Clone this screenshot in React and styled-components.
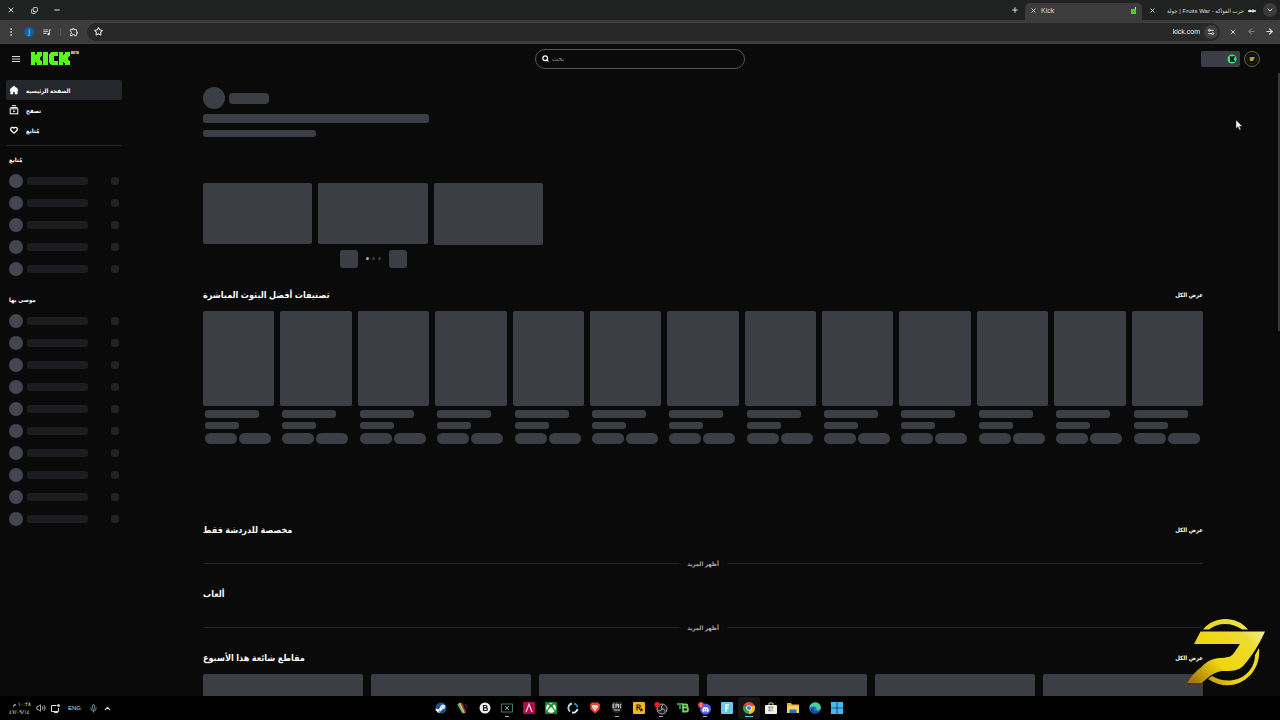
import React from "react";
import styled, { createGlobalStyle, css } from "styled-components";
import {
  Search,
  X,
  Plus,
  Minus,
  Star,
  ArrowLeft,
  ArrowRight,
  ChevronDown,
  ChevronUp,
  EllipsisVertical,
  Settings2,
  Mic,
  Volume2,
  Heart,
  Copy,
} from "lucide-react";
import { FaDiscord, FaSteamSymbol, FaXbox } from "react-icons/fa";
import { MdOutlineExtension, MdQueueMusic } from "react-icons/md";

const following = [1, 2, 3, 4, 5];
const recommended = [1, 2, 3, 4, 5, 6, 7, 8, 9, 10];
const categories = [1, 2, 3, 4, 5, 6, 7, 8, 9, 10, 11, 12, 13];
const clips = [1, 2, 3, 4, 5, 6];

function KickLogo() {
  return (
    <svg width="50" height="16" viewBox="0 0 50 16" role="img" aria-label="Kick">
      <g fill="#53fc18">
        <path d="M1 1h4v3h1V3h1V1h5v4h-1v1h-1v3h1v1h1v4H7v-2H6v-1H5v3H1z" />
        <path d="M13 1h5v13h-5z" />
        <path d="M21 1h7v4h-4v5h4v4h-7v-1h-1v-1h-1V3h1V2h1z" />
        <path d="M29 1h4v3h1V3h1V1h5v4h-1v1h-1v3h1v1h1v4h-5v-2h-1v-1h-1v3h-4z" />
      </g>
    </svg>
  );
}

function KickCoin() {
  return (
    <svg width="10" height="10" viewBox="0 0 10 10">
      <circle cx="5" cy="5" r="4.500" fill="#35e57c" />
      <path d="M3 2h1.500v1.600L6 2h1.600v1.600L6.300 5l1.300 1.400V8H6L4.500 6.400V8H3z" fill="#06150b" />
    </svg>
  );
}

function HomeIcon() {
  return (
    <svg width="10" height="10" viewBox="0 0 10 10" fill="#fff">
      <path d="M5 .8 1.200 3.800v1.400H.8V6h.6v3.200h2.800V7h1.600v2.200h2.800V6h.6V5.200h-.4V3.800z" />
    </svg>
  );
}

function BrowseIcon() {
  return (
    <svg width="10" height="10" viewBox="0 0 10 10" fill="none" stroke="#fff">
      <path d="M3 .7h4M1.500 2.500h7" />
      <rect x="1.200" y="3.800" width="7.600" height="5" />
      <path d="M4.300 5v2.600L6.400 6.300z" fill="#fff" stroke="none" />
    </svg>
  );
}

function HeartIcon() {
  return (
    <svg width="10" height="10" viewBox="0 0 10 10">
      <Heart x="1" y="1" size={8} strokeWidth={4} />
    </svg>
  );
}

function Emblem() {
  return (
    <svg width="80" height="72" viewBox="0 0 80 72">
      <defs>
        <linearGradient id="gold" gradientUnits="userSpaceOnUse" x1="72" y1="4" x2="8" y2="66">
          <stop offset="0" stopColor="#f1efa0" />
          <stop offset="0.250" stopColor="#ecdc2c" />
          <stop offset="0.650" stopColor="#efd60c" />
          <stop offset="1" stopColor="#a8760a" />
        </linearGradient>
      </defs>
      <g fill="url(#gold)">
        <path d="M17 12.500C28-1.500 51-1.500 62 12.500H56C47 5 31 5 23 12.500Z" />
        <path d="M73 31C76 59 47 79 22 62L26 59C46 71 69 58 69 38Z" />
        <path d="M14.500 14.500H79C74 26 66 39 58 48C53 54 46 54 36 54C26 55 20 63 15.500 66H1.500C4 60 10 54 15.500 50C22 43 28 41 36 41C43 40 45 40 48 36L54 27H8Z" />
      </g>
    </svg>
  );
}

function ColorSquare({ color, children }) {
  return (
    <svg width="12" height="12" viewBox="0 0 12 12">
      <rect width="12" height="12" rx="1" fill={color} />
      {children}
    </svg>
  );
}

const apps = [
  {
    name: "Steam",
    icon: (
      <svg width="12" height="12" viewBox="0 0 12 12">
        <circle cx="6" cy="6" r="5.500" fill="#17529a" />
        <FaSteamSymbol x="0" y="1" size={11} color="#fff" />
      </svg>
    ),
  },
  {
    name: "Stripes",
    icon: (
      <svg width="12" height="12" viewBox="0 0 12 12" strokeWidth="1.800">
        <path d="M1 2l5 9" stroke="#3fae82" />
        <path d="M2.500 1l5 10" stroke="#e4c553" />
        <path d="M4.500 1l4 9" stroke="#9c2d39" />
        <path d="M8 2l2 4" stroke="#381c42" />
      </svg>
    ),
  },
  {
    name: "B",
    icon: (
      <svg width="12" height="12" viewBox="0 0 12 12">
        <circle cx="6" cy="6" r="5.500" fill="#eee" />
        <path d="M4.500 3.500h2.200c1.600 0 1.600 2.300 0 2.300H4.500h2.600c1.700 0 1.700 2.700 0 2.700H4.500z" fill="none" stroke="#181818" strokeWidth="1.200" />
      </svg>
    ),
  },
  {
    name: "Monitor",
    open: true,
    icon: (
      <svg width="12" height="12" viewBox="0 0 12 12" fill="none" stroke="#49766c">
        <rect x=".5" y="2" width="11" height="8" />
        <path d="m4 4 4 4M8 4 4 8" stroke="#75a99a" />
      </svg>
    ),
  },
  {
    name: "Lambda",
    icon: (
      <ColorSquare color="#a80d4c">
        <path d="M3 10 6 2l3 8" fill="none" stroke="#f5c8d8" strokeWidth="1.300" />
      </ColorSquare>
    ),
  },
  {
    name: "Xbox",
    icon: (
      <ColorSquare color="#168a2b">
        <FaXbox x="1" y="1" size={10} color="#fff" />
      </ColorSquare>
    ),
  },
  {
    name: "Ring",
    icon: (
      <svg width="12" height="12" viewBox="0 0 12 12" fill="none" strokeWidth="1.800">
        <path d="M5 1.500a4.600 4.600 0 0 0-2 8" stroke="#b9d4ef" />
        <path d="M7 1.500a4.600 4.600 0 0 1 3.500 4" stroke="#3f7fb8" />
        <path d="M10.500 7A4.600 4.600 0 0 1 5 10.500" stroke="#e6eef6" />
      </svg>
    ),
  },
  {
    name: "Brave",
    icon: (
      <svg width="12" height="12" viewBox="0 0 12 12">
        <path d="M3 .5h6l2 2-.5 5L6 11.500 1.500 7.500 1 2.500z" fill="#ee4027" />
        <path d="M3.500 3 5 3.300h2L8.500 3l.5 2-1.500 2L6 9.500 4.500 7 3 5z" fill="#fff" />
        <path d="m4.200 4.800 1.300.7M7.800 4.800l-1.300.7M6 6v1.500" stroke="#ee4027" strokeWidth=".8" />
      </svg>
    ),
  },
  {
    name: "Epic",
    open: true,
    icon: (
      <svg width="12" height="12" viewBox="0 0 12 12">
        <path d="M1 0h10v9L6 11.500 1 9z" fill="#24272a" />
        <path d="M3.500 2H2v4h1.500M2 4h1.200M4.900 6V2h1.300v2H5M7.500 2v4M10.200 2.500H9.200v3h1M3 8h6" fill="none" stroke="#ddd" strokeWidth=".9" />
      </svg>
    ),
  },
  {
    name: "Rockstar",
    icon: (
      <ColorSquare color="#f2b51d">
        <path d="M4 8.500V3h2.200c1.500 0 1.300 2.300 0 2.300H4.500M6 5.500l.8 2" fill="none" stroke="#2a2008" strokeWidth="1.200" />
        <path d="m8.200 5.500.6 1.500h1.700L9.200 8l.4 1.700-1.400-1-1.400 1L7.200 8 6 7h1.600z" fill="#2a2008" />
      </ColorSquare>
    ),
  },
  {
    name: "OBS",
    open: true,
    icon: (
      <svg width="14" height="13" viewBox="0 0 14 13">
        <circle cx="8" cy="7" r="5" fill="#1d1e20" stroke="#aaa" />
        <path d="M8 7c-1-2-.5-3.500.8-4M8 7c2 0 3.200 1 3 2.500M8 7c-.8 1.800-2.500 2.300-3.600 1.500" fill="none" stroke="#bbb" />
        <circle cx="3.200" cy="2.800" r="2.800" fill="#ed1c1c" />
      </svg>
    ),
  },
  {
    name: "TB",
    icon: (
      <svg width="12" height="12" viewBox="0 0 12 12" fill="none" strokeWidth="1.800">
        <path d="M0 2h6M3 2v5" stroke="#3b8f5e" />
        <path d="M6 2.500h3c2 0 2 3 0 3H6h3.500c2 0 2 4 0 4H6zv7" stroke="#76d15e" />
      </svg>
    ),
  },
  {
    name: "Discord",
    open: true,
    icon: (
      <svg width="14" height="13" viewBox="0 0 14 13">
        <circle cx="7.500" cy="7" r="5.500" fill="#5562e8" />
        <FaDiscord x="4" y="4" size={7} color="#fff" />
        <circle cx="3" cy="3" r="3" fill="#dc4452" />
        <path d="M2 2h2M2 4h2" stroke="#f4bfc4" />
      </svg>
    ),
  },
  {
    name: "F",
    icon: (
      <ColorSquare color="#69c6e6">
        <path d="M5 10V3h3M5 6h2.500" fill="none" stroke="#f3fcff" strokeWidth="1.500" />
      </ColorSquare>
    ),
  },
  {
    name: "Chrome",
    active: true,
    icon: (
      <svg width="12" height="12" viewBox="0 0 12 12">
        <path d="M6 6 .8 3A6 6 0 0 1 11.200 3z" fill="#e8453c" />
        <path d="M6 6 11.200 3A6 6 0 0 1 6 12z" fill="#fbc116" />
        <path d="M6 6v6A6 6 0 0 1 .8 3z" fill="#2ea14f" />
        <circle cx="6" cy="6" r="2.800" fill="#fff" />
        <circle cx="6" cy="6" r="2.100" fill="#3b7de9" />
      </svg>
    ),
  },
  {
    name: "Store",
    icon: (
      <svg width="12" height="12" viewBox="0 0 12 12">
        <path d="M4 3V1h4v2" fill="none" stroke="#b9c4cc" />
        <rect y="3" width="12" height="9" rx="1" fill="#edf0f2" />
        <path d="M3.500 4.500h2v2h-2z" fill="#ef5334" />
        <path d="M6.200 4.500h2v2h-2z" fill="#71b528" />
        <path d="M3.500 7.300h2v2h-2z" fill="#2a9de0" />
        <path d="M6.200 7.300h2v2h-2z" fill="#f4b51b" />
      </svg>
    ),
  },
  {
    name: "Files",
    icon: (
      <svg width="12" height="12" viewBox="0 0 12 12">
        <path d="M0 1h4l1 1.500h7V11H0z" fill="#eeb42c" />
        <path d="M0 4h12v7H0z" fill="#fad462" />
        <path d="M2.500 7.500h7V11h-7z" fill="#2774b8" />
      </svg>
    ),
  },
  {
    name: "Edge",
    icon: (
      <svg width="12" height="12" viewBox="0 0 12 12">
        <circle cx="6" cy="6" r="5.800" fill="#1c78c8" />
        <path d="M.3 5.500C1.500-1.500 12-1.200 11.800 6c-.3 2-3 2.400-4.600 1.600C8.600 5.500 6 3 .3 5.500z" fill="#48cf9b" />
        <path d="M5 5.200c-1.500 2.400.5 5.200 5.300 4.200C8 12.500 2 12 1.800 8.300 1.800 6.500 3.500 5.200 5 5.200z" fill="#124b92" />
      </svg>
    ),
  },
  {
    name: "Start",
    icon: (
      <svg width="12" height="12" viewBox="0 0 12 12" fill="#45b8f2">
        <path d="M0 0h5.700v5.700H0zM6.300 0H12v5.700H6.300zM0 6.300h5.700V12H0zM6.300 6.300H12V12H6.300z" />
      </svg>
    ),
  },
];

function BrowserChrome() {
  return (
    <>
      <TabStrip>
        <WindowButtons>
          <IconButton aria-label="Close window"><X size={8} strokeWidth={3} /></IconButton>
          <IconButton aria-label="Restore"><RestoreIcon size={7} strokeWidth={3} /></IconButton>
          <IconButton aria-label="Minimize"><Minus size={8} strokeWidth={3} /></IconButton>
        </WindowButtons>
        <Tabs>
          <IconButton aria-label="New tab"><Plus size={8} strokeWidth={3} /></IconButton>
          <Tab $active>
            <X size={7} strokeWidth={3} />
            <span>Kick</span>
            <Favicon width="7" height="8" viewBox="0 0 7 8">
              <path d="M1 2h5v5H1z" fill="#43d91c" />
              <path d="M3 4h1v1H3z" fill="#246d16" />
              <path d="M5 0h1v2H5z" fill="#d5ffd0" />
            </Favicon>
          </Tab>
          <Tab>
            <X size={7} strokeWidth={3} />
            <TabTitle dir="rtl">حرب الفواكه - Fruits War | جولة</TabTitle>
            <svg width="8" height="4" viewBox="0 0 8 4">
              <path d="M0 2h8M2 .8v2.400M5 .5v3" stroke="#eee" strokeWidth="1.400" />
            </svg>
          </Tab>
          <RoundButton aria-label="Search tabs"><ChevronDown size={8} strokeWidth={3} /></RoundButton>
        </Tabs>
      </TabStrip>
      <Toolbar>
        <ToolGroup>
          <IconButton aria-label="Menu"><EllipsisVertical size={10} /></IconButton>
          <Profile>j</Profile>
          <IconButton aria-label="Media"><MdQueueMusic size={10} /></IconButton>
          <Separator />
          <IconButton aria-label="Extensions"><MdOutlineExtension size={10} /></IconButton>
        </ToolGroup>
        <AddressBar>
          <Star size={9} strokeWidth={3} />
          <Address aria-label="Address" defaultValue="kick.com" />
          <SiteInfo><Settings2 size={8} strokeWidth={3} /></SiteInfo>
        </AddressBar>
        <NavGroup>
          <IconButton aria-label="Stop"><X size={8} strokeWidth={3} /></IconButton>
          <IconButton aria-label="Forward" $dim><ArrowLeft size={9} strokeWidth={3} /></IconButton>
          <IconButton aria-label="Back"><ArrowRight size={9} strokeWidth={3} /></IconButton>
        </NavGroup>
      </Toolbar>
    </>
  );
}

function Channels({ title, items }) {
  return (
    <ChannelGroup>
      <ChannelTitle>{title}</ChannelTitle>
      {items.map((item) => (
        <Channel key={item}>
          <Avatar />
          <ChannelName />
          <ChannelDot />
        </Channel>
      ))}
    </ChannelGroup>
  );
}

function SectionHead({ title, all }) {
  return (
    <Head>
      <Title>{title}</Title>
      {all && <AllLink href="#all">عرض الكل</AllLink>}
    </Head>
  );
}

function ShowMore() {
  return (
    <More>
      <MoreButton>أظهر المزيد</MoreButton>
    </More>
  );
}

function App() {
  return (
    <Screen>
      <GlobalStyle />
      <BrowserChrome />
      <Page>
        <Header>
          <Brand>
            <MenuButton aria-label="Menu">
              <svg width="8" height="8" viewBox="0 0 8 8" stroke="#ddd">
                <path d="M0 1.500h8M0 4h8M0 6.500h8" strokeWidth="1.200" />
              </svg>
            </MenuButton>
            <KickLogo />
            <Beta>BETA</Beta>
          </Brand>
          <SearchBox>
            <Search size={7} strokeWidth={4} />
            <SearchInput aria-label="بحث" placeholder="بحث" />
          </SearchBox>
          <Account>
            <Coins aria-label="Wallet"><KickCoin /></Coins>
            <UserButton aria-label="Profile">
              <svg width="16" height="16" viewBox="0 0 16 16" fill="none">
                <circle cx="8" cy="8" r="7.500" stroke="#6f6a34" />
                <circle cx="8" cy="8" r="5" stroke="#2c2a18" />
                <path d="M5.500 6h5.500L9 10H6z" fill="#b89f22" />
              </svg>
            </UserButton>
          </Account>
        </Header>
        <Body>
          <Sidebar>
            <Nav>
              <NavLink href="#home" $active><HomeIcon />الصفحة الرئيسية</NavLink>
              <NavLink href="#browse"><BrowseIcon />تصفح</NavLink>
              <NavLink href="#following"><HeartIcon />مُتابع</NavLink>
            </Nav>
            <Channels title="مُتابع" items={following} />
            <Channels title="موصى بها" items={recommended} />
          </Sidebar>
          <Main>
            <Content>
              <Hero>
                <HeroUser>
                  <Bone $w={22} $h={22} $r={11} />
                  <Bone $w={40} $h={11} $r={4} />
                </HeroUser>
                <Bone $w={226} $h={9} $r={3} />
                <HeroSub><Bone $w={113} $h={7} $r={3} /></HeroSub>
                <HeroCards>
                  <Card />
                  <Card />
                  <Card />
                </HeroCards>
                <Pager>
                  <PagerButton aria-label="Previous" />
                  <Dots><Dot $active /><Dot /><Dot /></Dots>
                  <PagerButton aria-label="Next" />
                </Pager>
              </Hero>
              <SectionHead title="تصنيفات أفضل البثوث المباشرة" all />
              <CategoryGrid>
                {categories.map((item) => (
                  <div key={item}>
                    <Poster />
                    <PosterInfo>
                      <Bone $w={54} $h={8} $r={3} />
                      <Bone $w={34} $h={7} $r={3} />
                      <Pills>
                        <Bone $w={32} $h={11} $r={6} />
                        <Bone $w={32} $h={11} $r={6} />
                      </Pills>
                    </PosterInfo>
                  </div>
                ))}
              </CategoryGrid>
              <SectionHead title="مخصصة للدردشة فقط" all />
              <ShowMore />
              <SectionHead title="ألعاب" />
              <ShowMore />
              <SectionHead title="مقاطع شائعة هذا الأسبوع" all />
              <ClipGrid>
                {clips.map((item) => <Clip key={item} />)}
              </ClipGrid>
            </Content>
          </Main>
        </Body>
        <ScrollThumb />
      </Page>
      <Taskbar>
        <Tray>
          <Clock dir="rtl">
            <span>١٠:٢٨ م</span>
            <span dir="ltr">٤٧/٠٩/١٤</span>
          </Clock>
          <Volume2 size={10} strokeWidth={2} />
          <svg width="9" height="9" viewBox="0 0 9 9" fill="none" stroke="#ddd">
            <path d="M5.500 1.500h-5v6h7V4M3 8.500h4" />
            <circle cx="7.500" cy="1.500" r="1" fill="#ddd" />
          </svg>
          <Language>ENG</Language>
          <Mic size={9} strokeWidth={2} color="#7fb5b5" />
          <ChevronUp size={9} strokeWidth={3} />
        </Tray>
        <Apps>
          {apps.map((app) => (
            <AppButton key={app.name} aria-label={app.name} $open={app.open} $active={app.active}>
              {app.icon}
            </AppButton>
          ))}
        </Apps>
      </Taskbar>
      <Watermark><Emblem /></Watermark>
      <Cursor width="8" height="12" viewBox="0 0 8 12">
        <path d="M1 1v8.500l2-1.800L4.500 11l1.300-.6L4.500 7.300h2.700z" fill="#fff" stroke="#222" strokeWidth=".5" />
      </Cursor>
    </Screen>
  );
}

export default App;

const bone = "#3b3e44";

const GlobalStyle = createGlobalStyle`
  * {
    box-sizing: border-box;
  }
  body {
    margin: 0;
    background: #0a0a0a;
    color: #fff;
    font-family: "Liberation Sans", "DejaVu Sans Condensed", "DejaVu Sans", sans-serif;
    font-size: 7px;
  }
  button {
    padding: 0;
    border: 0;
    background: none;
    color: inherit;
    font: inherit;
  }
  a {
    color: inherit;
    text-decoration: none;
  }
  svg {
    flex: none;
  }
`;

const Screen = styled.div`
  position: relative;
  display: flex;
  flex-direction: column;
  height: 100vh;
  overflow: hidden;
`;

const TabStrip = styled.div`
  flex: none;
  display: flex;
  justify-content: space-between;
  height: 20px;
  background: #202221;
  color: #ddd;
`;

const IconButton = styled.button`
  display: flex;
  align-items: center;
  justify-content: center;
  width: 16px;
  opacity: ${(props) => (props.$dim ? 0.4 : 1)};
`;

const RestoreIcon = styled(Copy)`
  transform: scaleY(-1);
`;

const WindowButtons = styled.div`
  display: flex;
  gap: 7px;
  padding-left: 3px;
`;

const Tabs = styled.div`
  display: flex;
  align-items: center;
  gap: 2px;
  padding-right: 3px;
`;

const Tab = styled.div`
  display: flex;
  align-items: center;
  gap: 4px;
  width: 117px;
  height: 17px;
  margin-top: 3px;
  padding: 0 5px;
  padding-bottom: 2px;
  border-radius: 5px 5px 0 0;
  background: ${(props) => (props.$active ? "#3c3c3c" : "transparent")};
`;

const TabTitle = styled.span`
  flex: 1;
  font-size: 6px;
  white-space: nowrap;
`;

const Favicon = styled.svg`
  margin-left: auto;
`;

const RoundButton = styled.button`
  display: flex;
  align-items: center;
  justify-content: center;
  width: 14px;
  height: 14px;
  border-radius: 50%;
  background: #3b3b3b;
`;

const Toolbar = styled.div`
  flex: none;
  display: flex;
  align-items: center;
  height: 24px;
  border-bottom: 1px solid #424242;
  background: #3c3c3c;
  color: #ddd;
`;

const ToolGroup = styled.div`
  display: flex;
  align-items: center;
  gap: 3px;
  width: 87px;
  padding-left: 3px;
`;

const Profile = styled.span`
  width: 10px;
  border-radius: 50%;
  background: #0c62a5;
  line-height: 10px;
  text-align: center;
  margin: 0 2px;
`;

const Separator = styled.span`
  width: 1px;
  height: 8px;
  margin: 0 2px;
  background: #5c5c5c;
`;

const AddressBar = styled.div`
  flex: 1;
  display: flex;
  align-items: center;
  gap: 4px;
  height: 18px;
  padding: 0 2px 0 7px;
  border-radius: 9px;
  background: #282828;
`;

const Address = styled.input`
  flex: 1;
  min-width: 0;
  padding: 0;
  border: 0;
  background: none;
  color: #eee;
  font: inherit;
  text-align: right;
`;

const SiteInfo = styled.span`
  display: flex;
  align-items: center;
  justify-content: center;
  width: 14px;
  height: 14px;
  border-radius: 50%;
  background: #404040;
`;

const NavGroup = styled.div`
  display: flex;
  gap: 2px;
  padding: 0 3px 0 5px;
`;

const Page = styled.div`
  position: relative;
  flex: 1;
  display: flex;
  flex-direction: column;
  min-height: 0;
  overflow: hidden;
  background: #0a0a0a;
`;

const Header = styled.header`
  flex: none;
  display: grid;
  grid-template-columns: 1fr 210px 1fr;
  align-items: center;
  height: 29px;
`;

const Brand = styled.div`
  display: flex;
  align-items: center;
  padding-left: 12px;
`;

const MenuButton = styled.button`
  display: flex;
  margin-right: 10px;
`;

const Beta = styled.span`
  align-self: flex-start;
  margin-left: -9px;
  font-size: 3px;
  font-weight: bold;
`;

const SearchBox = styled.label`
  display: flex;
  align-items: center;
  gap: 3px;
  height: 20px;
  padding: 0 6px;
  border: 1px solid #56585a;
  border-radius: 10px;
`;

const SearchInput = styled.input`
  flex: 1;
  min-width: 0;
  padding: 0;
  border: 0;
  background: none;
  color: #fff;
  font: inherit;
  &::placeholder {
    color: #888;
  }
`;

const Account = styled.div`
  display: flex;
  align-items: center;
  justify-content: flex-end;
  gap: 4px;
  padding-right: 20px;
`;

const Coins = styled.button`
  display: flex;
  align-items: center;
  justify-content: flex-end;
  width: 39px;
  height: 16px;
  padding-right: 3px;
  border-radius: 2px;
  background: #3c3e47;
`;

const UserButton = styled.button`
  display: flex;
`;

const Body = styled.div`
  flex: 1;
  display: flex;
  min-height: 0;
`;

const Sidebar = styled.aside`
  flex: none;
  width: 128px;
  padding: 7px 6px;
`;

const Nav = styled.nav`
  display: flex;
  flex-direction: column;
  padding-bottom: 5px;
  border-bottom: 1px solid #26282a;
`;

const NavLink = styled.a`
  display: flex;
  align-items: center;
  gap: 7px;
  height: 20px;
  padding-left: 3px;
  border-radius: 2px;
  font-size: 6px;
  font-weight: bold;
  background: ${(props) => (props.$active ? "#24272b" : "transparent")};
`;

const ChannelGroup = styled.section`
  padding: 5px 3px 0;
  & + & {
    padding-top: 11px;
  }
`;

const ChannelTitle = styled.h2`
  margin: 0;
  font-size: 6px;
  line-height: 19px;
`;

const Channel = styled.div`
  display: flex;
  align-items: center;
  gap: 4px;
  height: 22px;
`;

const Avatar = styled.span`
  width: 14px;
  height: 14px;
  border-radius: 50%;
  background: #434550;
`;

const ChannelName = styled.span`
  width: 61px;
  height: 8px;
  border-radius: 3px;
  background: #1c1d20;
`;

const ChannelDot = styled.span`
  width: 8px;
  height: 8px;
  margin-left: auto;
  border-radius: 3px;
  background: #202225;
`;

const Main = styled.main`
  flex: 1;
  min-width: 0;
  padding-right: 2px;
`;

const Content = styled.div`
  max-width: 1000px;
  margin: 0 auto;
`;

const Bone = styled.span`
  display: block;
  width: ${(props) => props.$w}px;
  height: ${(props) => props.$h}px;
  border-radius: ${(props) => props.$r}px;
  background: ${bone};
`;

const Hero = styled.section`
  width: 340px;
  padding-top: 14px;
  padding-bottom: 14px;
`;

const HeroUser = styled.div`
  display: flex;
  align-items: center;
  gap: 4px;
  margin-bottom: 5px;
`;

const HeroSub = styled.div`
  padding: 7px 0 46px;
`;

const HeroCards = styled.div`
  display: grid;
  grid-template-columns: repeat(3, 1fr);
  gap: 6px;
`;

const Card = styled.div`
  aspect-ratio: 16 / 9;
  border-radius: 2px;
  background: ${bone};
`;

const Pager = styled.div`
  display: flex;
  align-items: center;
  justify-content: center;
  gap: 8px;
  margin-top: 5px;
`;

const PagerButton = styled.button`
  width: 18px;
  height: 18px;
  border-radius: 3px;
  background: ${bone};
`;

const Dots = styled.div`
  display: flex;
  gap: 3px;
`;

const Dot = styled.span`
  width: 3px;
  height: 3px;
  border-radius: 50%;
  background: ${(props) => (props.$active ? "#aaa" : "#3a3c40")};
`;

const Head = styled.div`
  display: flex;
  align-items: center;
  justify-content: space-between;
  height: 26px;
`;

const Title = styled.h2`
  margin: 0;
  font-size: 9px;
  line-height: 20px;
`;

const AllLink = styled.a`
  font-size: 6px;
  font-weight: bold;
`;

const CategoryGrid = styled.div`
  display: grid;
  grid-template-columns: repeat(13, 1fr);
  gap: 6px;
  padding: 3px 0 73px;
`;

const Poster = styled.div`
  aspect-ratio: 3 / 4;
  border-radius: 2px;
  background: ${bone};
`;

const PosterInfo = styled.div`
  display: flex;
  flex-direction: column;
  gap: 4px;
  padding: 4px 2px 0;
`;

const Pills = styled.div`
  display: flex;
  gap: 2px;
`;

const More = styled.div`
  display: flex;
  align-items: center;
  gap: 8px;
  height: 38px;
  padding-top: 3px;
  &::before,
  &::after {
    content: "";
    flex: 1;
    height: 1px;
    background: #202224;
  }
`;

const MoreButton = styled.button`
  color: #aaa;
  font-size: 6px;
  font-weight: bold;
`;

const ClipGrid = styled.div`
  display: grid;
  grid-template-columns: repeat(6, 1fr);
  gap: 8px;
  padding-top: 3px;
`;

const Clip = styled.div`
  aspect-ratio: 16 / 9;
  border-radius: 2px;
  background: ${bone};
`;

const ScrollThumb = styled.div`
  position: absolute;
  top: 29px;
  right: 0;
  width: 2px;
  height: 258px;
  background: #38393b;
`;

const Taskbar = styled.footer`
  flex: none;
  display: grid;
  grid-template-columns: 1fr auto 1fr;
  align-items: center;
  height: 24px;
  padding-right: 2px;
  background: #000;
`;

const Tray = styled.div`
  display: flex;
  align-items: center;
  gap: 5px;
  padding-left: 9px;
  color: #ddd;
`;

const Clock = styled.div`
  display: flex;
  flex-direction: column;
  width: 22px;
  font-size: 6px;
  line-height: 8px;
  white-space: nowrap;
`;

const Language = styled.span`
  margin: 0 3px;
  font-size: 6px;
`;

const Apps = styled.div`
  display: flex;
`;

const AppButton = styled.button`
  position: relative;
  display: flex;
  align-items: center;
  justify-content: center;
  width: 22px;
  height: 22px;
  border-radius: 2px;
  background: ${(props) => (props.$active ? "#161616" : "none")};
  ${(props) =>
    (props.$open || props.$active) &&
    css`
      &::after {
        content: "";
        position: absolute;
        bottom: 2px;
        left: 50%;
        width: ${props.$active ? 8 : 4}px;
        height: 1px;
        transform: translateX(-50%);
        background: ${props.$active ? "#60c5f0" : "#aaa"};
      }
    `}
`;

const Watermark = styled.div`
  position: absolute;
  right: 14px;
  bottom: 30px;
  pointer-events: none;
`;

const Cursor = styled.svg`
  position: absolute;
  top: 119px;
  left: 1235px;
`;
